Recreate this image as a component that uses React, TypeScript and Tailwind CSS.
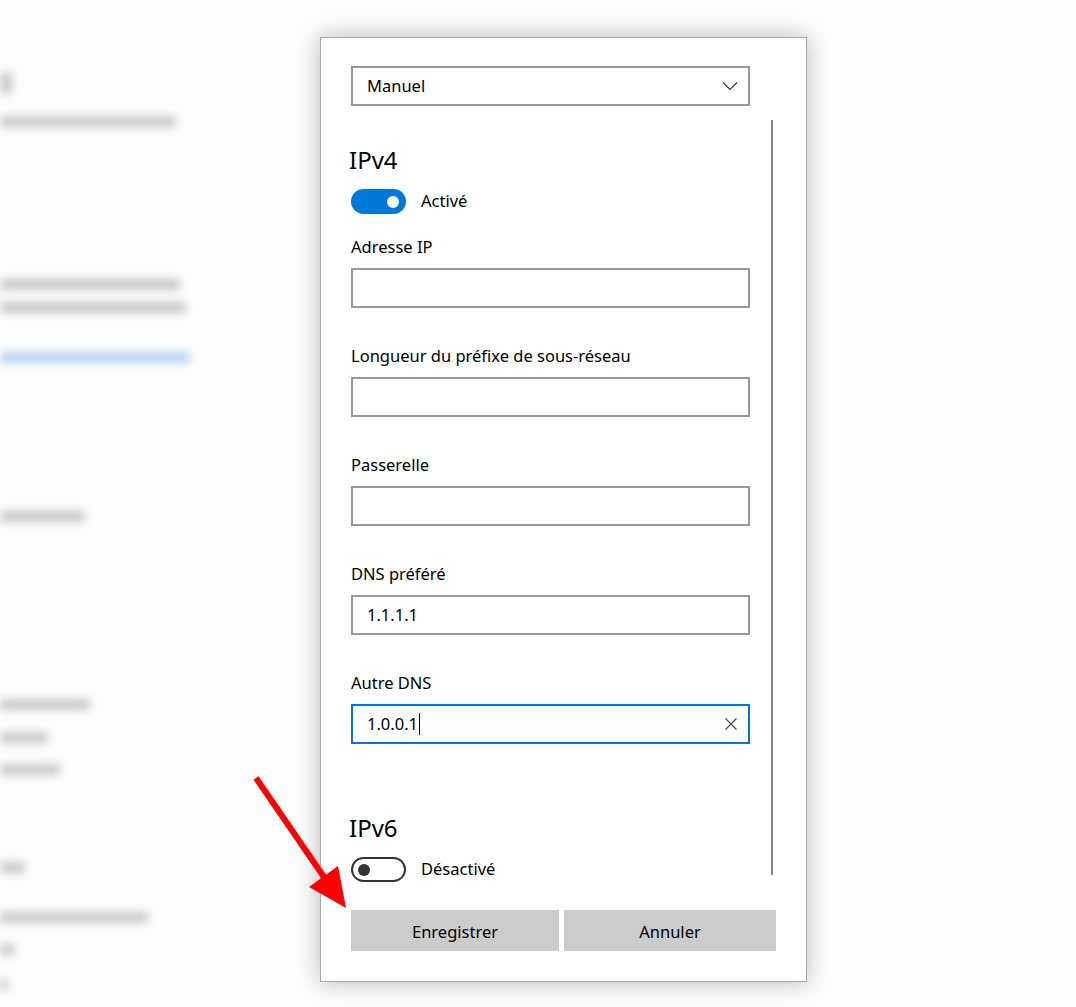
import { ReactNode } from "react";

const font = { fontFamily: '"Noto Sans", "Open Sans", sans-serif' };

function Blur({ w, mt, blue, h = "h-[11px]" }: { w: string; mt: string; blue?: boolean; h?: string }) {
  return <div className={`${w} ${mt} ${h} rounded-sm blur-[4px] ${blue ? "bg-[#b8d4f2]" : "bg-[#c9c9c9]"}`} />;
}

function Toggle({ on }: { on: boolean }) {
  return on ? (
    <div className="flex h-[25px] w-[55px] items-center justify-end rounded-full bg-[#0078d7] pr-[7px]">
      <div className="h-[12px] w-[12px] rounded-full bg-white" />
    </div>
  ) : (
    <div className="flex h-[25px] w-[55px] items-center rounded-full border-2 border-[#333] pl-[5px]">
      <div className="h-[12px] w-[12px] rounded-full bg-[#333]" />
    </div>
  );
}

function Field({ label, children, focused, first }: { label: string; children?: ReactNode; focused?: boolean; first?: boolean }) {
  return (
    <div className={first ? "mt-[21px]" : "mt-[36px]"}>
      <div className="h-[24px] text-[16.5px] leading-[24px] text-black">{label}</div>
      <div
        className={`mt-[9px] flex h-[40px] items-center border-2 pl-[14px] pr-[11px] text-[16.5px] text-black ${
          focused ? "border-[#0078d7]" : "border-[#999]"
        }`}
      >
        {children}
      </div>
    </div>
  );
}

export default function App() {
  return (
    <div className="relative flex h-[1007px] w-[1076px] overflow-hidden bg-[#fdfdfd]" style={font}>
      {/* blurred settings page behind the dialog */}
      <div className="flex w-[320px] flex-col">
        <Blur w="w-[12px]" mt="mt-[72px]" h="h-[22px]" />
        <Blur w="w-[176px]" mt="mt-[22px]" />
        <Blur w="w-[180px]" mt="mt-[152px]" />
        <Blur w="w-[186px]" mt="mt-[12px]" />
        <Blur w="w-[190px]" mt="mt-[39px]" blue />
        <Blur w="w-[85px]" mt="mt-[148px]" />
        <Blur w="w-[90px]" mt="mt-[177px]" />
        <Blur w="w-[48px]" mt="mt-[22px]" />
        <Blur w="w-[60px]" mt="mt-[21px]" />
        <Blur w="w-[25px]" mt="mt-[87px]" />
        <Blur w="w-[148px]" mt="mt-[39px]" />
        <Blur w="w-[15px]" mt="mt-[21px]" />
        <Blur w="w-[8px]" mt="mt-[24px]" />
      </div>

      {/* dialog */}
      <div className="mt-[37px] flex h-[945px] w-[487px] flex-col border border-[#a8a8a8] bg-white pl-[30px] shadow-[0_0_22px_rgba(0,0,0,0.28)]">
        <div className="mt-[28px] flex h-[40px] w-[399px] items-center justify-between border-2 border-[#999] pl-[14px] pr-[10px] text-[16.5px] text-black">
          <span>Manuel</span>
          <svg width="16" height="10" viewBox="0 0 16 10" fill="none">
            <path d="M1 1.5 L8 8.5 L15 1.5" stroke="#333" strokeWidth="1.1" />
          </svg>
        </div>

        <div className="mt-[14px] flex h-[761px]">
          <div className="flex w-[399px] flex-col">
            <div className="mt-[24px] h-[32px] text-[24px] leading-[32px] text-black" style={{ marginLeft: -2 }}>
              IPv4
            </div>
            <div className="mt-[13px] flex items-center gap-[15px]">
              <Toggle on />
              <span className="text-[16.5px] text-black">Activé</span>
            </div>
            <Field label="Adresse IP" first />
            <Field label="Longueur du préfixe de sous-réseau" />
            <Field label="Passerelle" />
            <Field label="DNS préféré">1.1.1.1</Field>
            <Field label="Autre DNS" focused>
              <span>1.0.0.1</span>
              <span className="ml-[1px] h-[22px] w-px bg-black" />
              <svg className="ml-auto" width="12" height="12" viewBox="0 0 12 12" fill="none">
                <path d="M0.5 0.5 L11.5 11.5 M11.5 0.5 L0.5 11.5" stroke="#444" strokeWidth="1.1" />
              </svg>
            </Field>
            <div className="mt-[68px] h-[32px] text-[24px] leading-[32px] text-black" style={{ marginLeft: -2 }}>
              IPv6
            </div>
            <div className="mt-[13px] flex items-center gap-[15px]">
              <Toggle on={false} />
              <span className="text-[16.5px] text-black">Désactivé</span>
            </div>
          </div>
          <div className="ml-[21px] h-[755px] w-[2px] bg-[#858585]" />
        </div>

        <div className="mt-[29px] flex gap-[5px]">
          <button className="h-[41px] w-[208px] bg-[#cccccc] pt-[3px] text-[16.5px] text-black">Enregistrer</button>
          <button className="h-[41px] w-[212px] bg-[#cccccc] pt-[3px] text-[16.5px] text-black">Annuler</button>
        </div>
      </div>

      {/* red annotation arrow */}
      <svg className="pointer-events-none absolute left-0 top-0" width="1076" height="1007">
        <line x1="256" y1="778" x2="326" y2="880" stroke="#ff0000" strokeWidth="6" />
        <polygon points="346,908 309,887 338,866" fill="#ff0000" />
      </svg>
    </div>
  );
}
